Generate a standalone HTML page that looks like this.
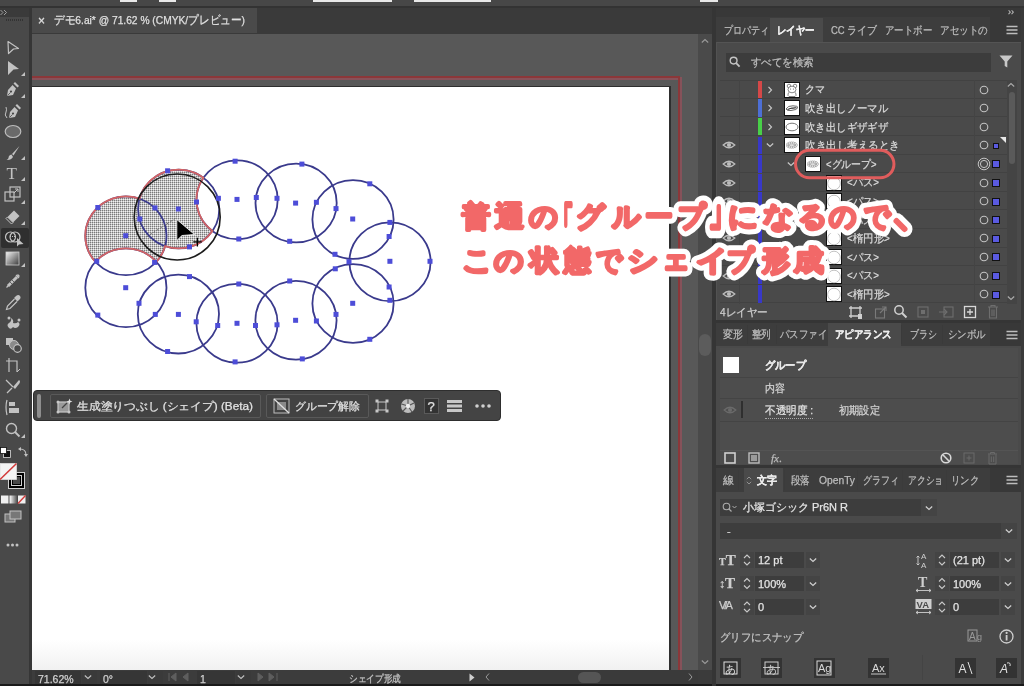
<!DOCTYPE html>
<html><head><meta charset="utf-8">
<style>
*{box-sizing:border-box;margin:0;padding:0}
html,body{width:1024px;height:686px;overflow:hidden;background:#3b3b3b;font-family:"Liberation Sans",sans-serif;color:#d6d6d6;font-size:11px}
.a{position:absolute}
.t{position:absolute;white-space:nowrap;line-height:1;-webkit-text-stroke:0.25px currentColor}
svg{position:absolute;overflow:visible}
</style></head><body><div class="a" style="left:0;top:0;width:1024px;height:686px;will-change:transform;overflow:hidden">

<div class="a" style="left:0px;top:0px;width:1024px;height:7px;background:#474747;"></div>
<div class="a" style="left:0px;top:6px;width:1024px;height:2px;background:#333;"></div>
<div class="a" style="left:120px;top:0px;width:17px;height:1.5px;background:#e8e8e8;"></div>
<div class="a" style="left:159px;top:0px;width:17px;height:1.5px;background:#e8e8e8;"></div>
<div class="a" style="left:313px;top:0px;width:79px;height:1.5px;background:#e8e8e8;"></div>
<div class="a" style="left:414px;top:0px;width:77px;height:1.5px;background:#e8e8e8;"></div>
<div class="a" style="left:700px;top:0px;width:18px;height:1.5px;background:#e8e8e8;"></div>
<div class="a" style="left:0px;top:8px;width:29px;height:678px;background:#494949;"></div>
<div class="a" style="left:0px;top:8px;width:29px;height:9px;background:#3a3a3a;"></div>
<div class="a" style="left:29px;top:8px;width:3px;height:678px;background:#363636;"></div>
<svg style="left:0px;top:9px;" width="10" height="7" viewBox="0 0 10 7"><path d="M0.5 1 L3 3.5 L0.5 6 M4 1 L6.5 3.5 L4 6" stroke="#aaa" stroke-width="0.9" fill="none"/></svg>
<svg style="left:6px;top:18px;" width="18" height="4" viewBox="0 0 18 4"><path d="M0 2H18" stroke="#333" stroke-width="2" stroke-dasharray="1 1"/></svg>
<svg style="left:6px;top:40px;" width="14" height="15" viewBox="0 0 14 15"><path d="M2 1.5 L12.5 8.5 L7.5 9 L2.5 13.5 Z" fill="none" stroke="#c2c2c2" stroke-width="1.2" stroke-linejoin="round"/></svg>
<svg style="left:6px;top:60px;" width="14" height="16" viewBox="0 0 14 16"><path d="M2 1 L13 9 L7.5 9.5 L2 15 Z" fill="#c2c2c2"/></svg>
<svg style="left:21px;top:72px;" width="4" height="4" viewBox="0 0 4 4"><path d="M4 0V4H0Z" fill="#c2c2c2"/></svg>
<svg style="left:4px;top:81px;" width="16" height="16" viewBox="0 0 16 16"><path d="M8.5 4 L12 7.5 L9 14 L3 15 L4 9 Z" fill="#c2c2c2"/><path d="M9.5 2.5 L11 1 L15 5 L13.5 6.5 Z" fill="#c2c2c2"/><circle cx="7" cy="10.5" r="1.1" fill="#494949"/><path d="M3.5 14.5 L6.5 11.5" stroke="#494949" stroke-width="0.8"/></svg>
<svg style="left:21px;top:94px;" width="4" height="4" viewBox="0 0 4 4"><path d="M4 0V4H0Z" fill="#c2c2c2"/></svg>
<svg style="left:4px;top:103px;" width="18" height="16" viewBox="0 0 18 16"><g transform="translate(2,0)"><path d="M8.5 4 L12 7.5 L9 14 L3 15 L4 9 Z" fill="#c2c2c2"/><path d="M9.5 2.5 L11 1 L15 5 L13.5 6.5 Z" fill="#c2c2c2"/><circle cx="7" cy="10.5" r="1.1" fill="#494949"/><path d="M3.5 14.5 L6.5 11.5" stroke="#494949" stroke-width="0.8"/></g><path d="M3 15 Q0 12 2 9 Q3 7 2 4" stroke="#c2c2c2" stroke-width="1" fill="none"/></svg>
<svg style="left:4px;top:124px;" width="18" height="15" viewBox="0 0 18 15"><ellipse cx="9" cy="7.5" rx="7.8" ry="6" fill="#6a6a6a" stroke="#bdbdbd" stroke-width="1.2"/></svg>
<svg style="left:5px;top:145px;" width="16" height="16" viewBox="0 0 16 16"><path d="M14.5 1 L7 9 L8.5 10.5 Z" fill="#c2c2c2"/><path d="M6.5 9.5 Q3.5 10 3.5 13 Q3 14.5 1.5 15 Q6 15.5 8 12 Z" fill="#c2c2c2"/></svg>
<svg style="left:21px;top:156px;" width="4" height="4" viewBox="0 0 4 4"><path d="M4 0V4H0Z" fill="#c2c2c2"/></svg>
<svg style="left:5px;top:164px;" width="16" height="16" viewBox="0 0 16 16"><text x="1.5" y="14.5" font-size="17" font-family="Liberation Serif" fill="#c2c2c2">T</text></svg>
<svg style="left:21px;top:177px;" width="4" height="4" viewBox="0 0 4 4"><path d="M4 0V4H0Z" fill="#c2c2c2"/></svg>
<svg style="left:4px;top:185px;" width="18" height="18" viewBox="0 0 18 18"><rect x="1" y="7" width="9" height="9" fill="none" stroke="#c2c2c2" stroke-width="1.2"/><rect x="6" y="2" width="10" height="10" fill="none" stroke="#c2c2c2" stroke-width="1.2"/><path d="M10 8 L14 4 M11 4H14V7" stroke="#c2c2c2" stroke-width="1" fill="none"/></svg>
<svg style="left:21px;top:200px;" width="4" height="4" viewBox="0 0 4 4"><path d="M4 0V4H0Z" fill="#c2c2c2"/></svg>
<svg style="left:5px;top:209px;" width="16" height="15" viewBox="0 0 16 15"><path d="M9 1.5 L14.5 7 L8 13.5 L2.5 8 Z" fill="#c2c2c2"/><path d="M2.5 8 L8 13.5 L6.5 15 L1 9.5 Z" fill="none" stroke="#c2c2c2" stroke-width="1"/></svg>
<svg style="left:21px;top:221px;" width="4" height="4" viewBox="0 0 4 4"><path d="M4 0V4H0Z" fill="#c2c2c2"/></svg>
<div class="a" style="left:1px;top:228px;width:28px;height:20px;background:#2f2f2f;border-radius:2px"></div>
<svg style="left:4px;top:230px;" width="22" height="17" viewBox="0 0 22 17"><circle cx="6.5" cy="7" r="5" fill="none" stroke="#c2c2c2" stroke-width="1.2"/><circle cx="11" cy="7" r="5" fill="none" stroke="#c2c2c2" stroke-width="1.2"/><path d="M6 6.5H12" stroke="#c2c2c2" stroke-width="1" stroke-dasharray="1 1"/><path d="M13 8 L13 16.5 L15 14.5 L19.5 14 Z" fill="#c2c2c2"/></svg>
<svg style="left:5px;top:251px;" width="17" height="16" viewBox="0 0 17 16"><defs><linearGradient id="lg" x1="0" y1="0" x2="1" y2="1"><stop offset="0" stop-color="#f4f4f4"/><stop offset="1" stop-color="#3a3a3a"/></linearGradient></defs><rect x="1" y="1" width="13" height="13" fill="url(#lg)" stroke="#cfcfcf" stroke-width="0.8"/></svg>
<svg style="left:21px;top:263px;" width="4" height="4" viewBox="0 0 4 4"><path d="M4 0V4H0Z" fill="#c2c2c2"/></svg>
<svg style="left:5px;top:273px;" width="16" height="16" viewBox="0 0 16 16"><path d="M3 13 L12 4" stroke="#c2c2c2" stroke-width="3"/><path d="M1.5 14.5 L4 12 M11 2 L14 5 M12.5 1.5 L14.5 3.5" stroke="#c2c2c2" stroke-width="1.3"/><path d="M5 9 L7 11 M7 7 L9 9" stroke="#494949" stroke-width="0.8"/></svg>
<svg style="left:5px;top:294px;" width="16" height="17" viewBox="0 0 16 17"><path d="M11 2 Q13.5 0 15 2 Q16.5 4 14 6 L12.5 7.5 L9 4 Z" fill="#c2c2c2"/><path d="M9.5 5 L2.5 12 L1.5 15.5 L5 14.5 L12 7.5" fill="none" stroke="#c2c2c2" stroke-width="1.2"/></svg>
<svg style="left:4px;top:315px;" width="19" height="16" viewBox="0 0 19 16"><path d="M5 13 Q2 10 5 8 Q8 6 7 3 Q10 5 9 8 Q12 9 14 7 Q17 9 14 12 Q11 14 9 12 Q7 15 5 13 Z" fill="#c2c2c2"/><circle cx="5" cy="3" r="1.5" fill="#c2c2c2"/><circle cx="15" cy="5" r="1.5" fill="#c2c2c2"/></svg>
<svg style="left:5px;top:337px;" width="18" height="16" viewBox="0 0 18 16"><rect x="1" y="1" width="7" height="7" fill="#c2c2c2"/><circle cx="9" cy="8" r="4.5" fill="#8a8a8a" stroke="#c2c2c2" stroke-width="1"/><circle cx="12.5" cy="11.5" r="3.8" fill="#494949" stroke="#c2c2c2" stroke-width="1.2"/></svg>
<svg style="left:5px;top:357px;" width="17" height="16" viewBox="0 0 17 16"><path d="M4 1V15M1 4H12V15" stroke="#c2c2c2" stroke-width="1.2" fill="none"/><path d="M12 15 L15 12" stroke="#c2c2c2" stroke-width="1"/></svg>
<svg style="left:4px;top:378px;" width="18" height="16" viewBox="0 0 18 16"><path d="M2 2 L9 9 M8 10 L3 15" stroke="#c2c2c2" stroke-width="1.3" fill="none"/><path d="M9 9 L15 2 Q17 3 15 6 L11 11 Z" fill="#c2c2c2"/></svg>
<svg style="left:5px;top:399px;" width="16" height="17" viewBox="0 0 16 17"><path d="M2 1 Q0 8 2 16" stroke="#c2c2c2" stroke-width="1.2" fill="none"/><rect x="4" y="3" width="6" height="4" fill="#c2c2c2"/><rect x="4" y="9" width="10" height="5" fill="#c2c2c2"/></svg>
<svg style="left:5px;top:422px;" width="17" height="16" viewBox="0 0 17 16"><circle cx="6.5" cy="6.5" r="5" fill="none" stroke="#c2c2c2" stroke-width="1.4"/><path d="M10 10 L14.5 14.5" stroke="#c2c2c2" stroke-width="1.8"/></svg>
<svg style="left:21px;top:434px;" width="4" height="4" viewBox="0 0 4 4"><path d="M4 0V4H0Z" fill="#c2c2c2"/></svg>
<svg style="left:0px;top:447px;" width="12" height="11" viewBox="0 0 12 11"><rect x="3.5" y="3.5" width="7" height="7" fill="#111" stroke="#ddd" stroke-width="0.8"/><rect x="0.5" y="0.5" width="6" height="6" fill="#fff" stroke="#111" stroke-width="0.8"/></svg>
<svg style="left:18px;top:447px;" width="10" height="11" viewBox="0 0 10 11"><path d="M2 2 Q8 2 8 8" stroke="#c2c2c2" stroke-width="1.1" fill="none"/><path d="M0 2 L3 0 L3 4Z M8 10 L6 7 H10Z" fill="#c2c2c2"/></svg>
<svg style="left:8px;top:472px;" width="18" height="18" viewBox="0 0 18 18"><rect x="0.5" y="0.5" width="16" height="16" fill="#000" stroke="#cfcfcf" stroke-width="1"/><rect x="3.5" y="3.5" width="10" height="10" fill="none" stroke="#cfcfcf" stroke-width="1"/><rect x="5" y="5" width="7" height="7" fill="#494949"/></svg>
<svg style="left:0px;top:463px;" width="17" height="17" viewBox="0 0 17 17"><rect x="0" y="0.5" width="16.5" height="16" fill="#f4f4f4" stroke="#ddd" stroke-width="0.8"/><path d="M0 16.5 L16.5 0.5" stroke="#d23a3a" stroke-width="1.6"/></svg>
<svg style="left:1px;top:495px;" width="24" height="9" viewBox="0 0 24 9"><defs><linearGradient id="lg2" x1="0" x2="1"><stop offset="0" stop-color="#fff"/><stop offset="1" stop-color="#555"/></linearGradient></defs><rect x="0" y="0.5" width="7.5" height="8" fill="#f0f0f0"/><rect x="8.5" y="0.5" width="7.5" height="8" fill="url(#lg2)"/><rect x="17" y="0.5" width="7.5" height="8" fill="#f0f0f0"/><path d="M17 8.5 L24.5 0.5" stroke="#d23a3a" stroke-width="1.3"/></svg>
<svg style="left:4px;top:510px;" width="18" height="13" viewBox="0 0 18 13"><rect x="1" y="4" width="10" height="8" fill="#777" stroke="#c2c2c2" stroke-width="1"/><rect x="6" y="1" width="11" height="8" fill="#777" stroke="#c2c2c2" stroke-width="1"/></svg>
<svg style="left:6px;top:543px;" width="13" height="4" viewBox="0 0 13 4"><circle cx="2" cy="2" r="1.5" fill="#c2c2c2"/><circle cx="6.5" cy="2" r="1.5" fill="#c2c2c2"/><circle cx="11" cy="2" r="1.5" fill="#c2c2c2"/></svg>
<div class="a" style="left:32px;top:8px;width:680px;height:26px;background:#3a3a3a;"></div>
<div class="a" style="left:32px;top:8px;width:225px;height:25px;background:#4a4a4a;"></div>
<div class="t" style="left:38px;top:14.5px;font-size:12px;color:#e0e0e0;">×</div>
<div class="t" style="left:54px;top:14.8px;font-size:11.5px;color:#e0e0e0;transform:scaleX(0.8902);transform-origin:0 0;">デモ6.ai* @ 71.62 % (CMYK/プレビュー)</div>
<div class="a" style="left:32px;top:34px;width:666px;height:636px;background:#585858;"></div>
<div class="a" style="left:32px;top:87px;width:637px;height:583px;background:#fff;"></div>
<div class="a" style="left:669px;top:86px;width:1.5px;height:584px;background:#2e2e2e;"></div>
<div class="a" style="left:32px;top:86px;width:638px;height:1px;background:#2e2e2e;"></div>
<div class="a" style="left:32px;top:640px;width:637px;height:30px;background:#fff;background:linear-gradient(#fff,#f1f1f1)"></div>
<div class="a" style="left:32px;top:76px;width:648px;height:2px;background:#8c3739;"></div>
<div class="a" style="left:32px;top:78px;width:649px;height:1.5px;background:#86525a;"></div>
<div class="a" style="left:678px;top:76px;width:2px;height:594px;background:#8c3739;"></div>
<div class="a" style="left:680px;top:77px;width:1.5px;height:593px;background:#86525a;"></div>
<svg width="1024" height="686" style="left:0;top:0">
<defs><pattern id="dots" width="2" height="2" patternUnits="userSpaceOnUse"><rect width="2" height="2" fill="#f2f2f2"/><rect width="1" height="1" fill="#7a7a7a"/><rect x="1" width="1" height="1" fill="#c2c2c2"/><rect y="1" width="1" height="1" fill="#c2c2c2"/></pattern></defs>
<path d="M95.39 261.8 A40.6 39.4 0 0 1 139.52 198.68 A40.6 39.4 0 0 1 203.4 177.73 A40.6 39.4 0 0 0 212.4 230.97 A40.6 39.4 0 0 1 165.08 246.12 A40.6 39.4 0 0 1 156.41 261.8 A40.6 39.4 0 0 0 95.39 261.8 Z" fill="url(#dots)"/>
<g fill="none" stroke="#3a3a8c" stroke-width="1.8">
<ellipse cx="125.9" cy="235.8" rx="40.6" ry="39.4"/>
<ellipse cx="178.7" cy="209.0" rx="40.6" ry="39.4"/>
<ellipse cx="237.1" cy="199.7" rx="40.6" ry="39.4"/>
<ellipse cx="296.1" cy="203.0" rx="40.6" ry="39.4"/>
<ellipse cx="353.0" cy="219.5" rx="40.6" ry="39.4"/>
<ellipse cx="390.0" cy="261.8" rx="40.6" ry="39.4"/>
<ellipse cx="353.0" cy="303.5" rx="40.6" ry="39.4"/>
<ellipse cx="296.0" cy="320.2" rx="40.6" ry="39.4"/>
<ellipse cx="237.0" cy="323.3" rx="40.6" ry="39.4"/>
<ellipse cx="178.4" cy="314.1" rx="40.6" ry="39.4"/>
<ellipse cx="125.9" cy="287.8" rx="40.6" ry="39.4"/>
</g>
<path d="M95.39 261.8 A40.6 39.4 0 0 1 139.52 198.68 A40.6 39.4 0 0 1 203.4 177.73 A40.6 39.4 0 0 0 212.4 230.97 A40.6 39.4 0 0 1 165.08 246.12 A40.6 39.4 0 0 1 156.41 261.8 A40.6 39.4 0 0 0 95.39 261.8 Z" fill="none" stroke="#d46464" stroke-width="1.8"/>
<circle cx="177.2" cy="217" r="43" fill="none" stroke="#1c1c1c" stroke-width="1.6"/>
<line x1="140" y1="241" x2="176" y2="218" stroke="#555" stroke-width="0.8" stroke-dasharray="2 2"/>
<g fill="#4d4dd8">
<rect x="95.3" y="205.0" width="5" height="5"/>
<rect x="123.2" y="233.2" width="5" height="5"/>
<rect x="165.1" y="168.3" width="5" height="5"/>
<rect x="152.5" y="205.4" width="5" height="5"/>
<rect x="175.9" y="206.5" width="5" height="5"/>
<rect x="137.3" y="216.5" width="5" height="5"/>
<rect x="194.0" y="199.5" width="5" height="5"/>
<rect x="187.0" y="244.4" width="5" height="5"/>
<rect x="94.2" y="258.8" width="5" height="5"/>
<rect x="152.1" y="259.9" width="5" height="5"/>
<rect x="232.6" y="158.7" width="5" height="5"/>
<rect x="215.9" y="195.8" width="5" height="5"/>
<rect x="234.5" y="196.9" width="5" height="5"/>
<rect x="253.8" y="195.0" width="5" height="5"/>
<rect x="274.5" y="195.8" width="5" height="5"/>
<rect x="236.3" y="236.5" width="5" height="5"/>
<rect x="299.4" y="161.6" width="5" height="5"/>
<rect x="293.1" y="200.6" width="5" height="5"/>
<rect x="313.9" y="199.8" width="5" height="5"/>
<rect x="333.5" y="206.1" width="5" height="5"/>
<rect x="287.2" y="238.8" width="5" height="5"/>
<rect x="367.3" y="181.3" width="5" height="5"/>
<rect x="350.2" y="216.5" width="5" height="5"/>
<rect x="387.4" y="219.9" width="5" height="5"/>
<rect x="386.6" y="234.0" width="5" height="5"/>
<rect x="332.5" y="251.8" width="5" height="5"/>
<rect x="346.5" y="259.2" width="5" height="5"/>
<rect x="387.4" y="258.8" width="5" height="5"/>
<rect x="427.5" y="258.8" width="5" height="5"/>
<rect x="332.8" y="266.3" width="5" height="5"/>
<rect x="386.6" y="284.5" width="5" height="5"/>
<rect x="387.4" y="297.8" width="5" height="5"/>
<rect x="350.2" y="300.8" width="5" height="5"/>
<rect x="367.3" y="336.8" width="5" height="5"/>
<rect x="333.5" y="311.9" width="5" height="5"/>
<rect x="313.9" y="318.5" width="5" height="5"/>
<rect x="293.1" y="317.8" width="5" height="5"/>
<rect x="299.8" y="356.4" width="5" height="5"/>
<rect x="287.2" y="278.5" width="5" height="5"/>
<rect x="274.5" y="322.3" width="5" height="5"/>
<rect x="253.0" y="323.0" width="5" height="5"/>
<rect x="234.5" y="320.8" width="5" height="5"/>
<rect x="232.6" y="359.4" width="5" height="5"/>
<rect x="236.3" y="281.5" width="5" height="5"/>
<rect x="215.2" y="323.0" width="5" height="5"/>
<rect x="193.7" y="319.3" width="5" height="5"/>
<rect x="175.9" y="311.9" width="5" height="5"/>
<rect x="165.1" y="349.0" width="5" height="5"/>
<rect x="187.0" y="274.1" width="5" height="5"/>
<rect x="136.5" y="300.8" width="5" height="5"/>
<rect x="152.8" y="311.9" width="5" height="5"/>
<rect x="123.2" y="285.2" width="5" height="5"/>
<rect x="95.3" y="312.6" width="5" height="5"/>
</g>
<path d="M176.8 219.5 L176.8 240.5 L182 235.5 L194.5 234.5 Z" fill="#000" stroke="#fff" stroke-width="0.8"/>
<path d="M197.4 237.7 V246.4 M193.3 241.8 H201.7" stroke="#000" stroke-width="1.3"/>
</svg>
<div class="a" style="left:698px;top:34px;width:14px;height:636px;background:#4a4a4a;"></div>
<div class="a" style="left:32px;top:670px;width:666px;height:14px;background:#3c3c3c;"></div>
<div class="a" style="left:0px;top:684px;width:1024px;height:2px;background:#1a1a1a;"></div>
<div class="a" style="left:712px;top:8px;width:4px;height:678px;background:#353535;"></div>
<div class="a" style="left:716px;top:8px;width:308px;height:676px;background:#4a4a4a;"></div>
<div class="a" style="left:716px;top:8px;width:308px;height:9px;background:#383838;"></div>
<div class="t" style="left:1008px;top:8.0px;font-size:9px;color:#bbbbbb;">&#8250;&#8250;</div>
<div class="a" style="left:716px;top:17px;width:308px;height:25px;background:#3d3d3d;"></div>
<div class="a" style="left:770px;top:18px;width:53px;height:24px;background:#4a4a4a;"></div>
<div class="t" style="left:724px;top:24.8px;font-size:10.5px;color:#bdbdbd;transform:scaleX(0.8182);transform-origin:0 0;">プロパティ</div>
<div class="t" style="left:777px;top:24.8px;font-size:10.5px;color:#ececec;transform:scaleX(0.8636);transform-origin:0 0;font-weight:bold">レイヤー</div>
<div class="t" style="left:831px;top:24.8px;font-size:10.5px;color:#bdbdbd;transform:scaleX(0.9003);transform-origin:0 0;">CC ライブ</div>
<div class="t" style="left:885px;top:24.8px;font-size:10.5px;color:#bdbdbd;transform:scaleX(0.8545);transform-origin:0 0;">アートボー</div>
<div class="t" style="left:940px;top:24.8px;font-size:10.5px;color:#bdbdbd;transform:scaleX(0.8727);transform-origin:0 0;">アセットの</div>
<div class="a" style="left:990px;top:17px;width:34px;height:25px;background:#383838;"></div>
<svg style="left:1006px;top:25px;" width="12" height="10" viewBox="0 0 12 10"><path d="M0.5 1.5H11.5M0.5 5H11.5M0.5 8.5H11.5" stroke="#bdbdbd" stroke-width="1.4"/></svg>
<div class="a" style="left:716px;top:42px;width:305px;height:1px;background:#545454;"></div>
<div class="a" style="left:716px;top:42px;width:1px;height:278px;background:#525252;"></div>
<div class="a" style="left:726px;top:53px;width:265px;height:19px;background:#3c3c3c;"></div>
<svg style="left:729px;top:56px;" width="12" height="12" viewBox="0 0 12 12"><circle cx="4.6" cy="4.6" r="3.4" fill="none" stroke="#c4c4c4" stroke-width="1.4"/><path d="M7.2 7.2 L10.6 10.6" stroke="#c4c4c4" stroke-width="1.8"/></svg>
<div class="t" style="left:751px;top:56.8px;font-size:10.5px;color:#bdbdbd;transform:scaleX(0.9545);transform-origin:0 0;">すべてを検索</div>
<svg style="left:999px;top:55px;" width="14" height="13" viewBox="0 0 14 13"><path d="M0.5 0.5 H13.5 L8.3 6.5 V12.5 L5.7 11 V6.5 Z" fill="#c8c8c8"/></svg>
<div class="a" style="left:720px;top:80px;width:287px;height:224px;background:#4a4a4a;"></div>
<div class="a" style="left:720px;top:97.8px;width:287px;height:1px;background:#424242;"></div>
<div class="a" style="left:758px;top:80.7px;width:4px;height:17.6px;background:#d54848;"></div>
<svg style="left:767px;top:85.5px;" width="6" height="8" viewBox="0 0 6 8"><path d="M1.5 0.8 L4.5 4 L1.5 7.2" fill="none" stroke="#c8c8c8" stroke-width="1.2"/></svg>
<div class="a" style="left:784px;top:81.5px;width:16px;height:16px;background:#111;"></div>
<div class="a" style="left:785px;top:82.5px;width:14px;height:14px;background:#fff;"></div>
<svg style="left:785px;top:82.5px;" width="14" height="14" viewBox="0 0 14 14"><circle cx="4" cy="3" r="1.8" fill="none" stroke="#555" stroke-width="0.7"/><circle cx="10" cy="3" r="1.8" fill="none" stroke="#555" stroke-width="0.7"/><ellipse cx="7" cy="6.5" rx="4" ry="3.3" fill="#fff" stroke="#555" stroke-width="0.7"/><circle cx="5.6" cy="6" r="0.5" fill="#333"/><circle cx="8.4" cy="6" r="0.5" fill="#333"/><path d="M3.5 9.5 Q2 13 4 13.5 H10 Q12 13 10.5 9.5" fill="none" stroke="#555" stroke-width="0.7"/></svg>
<div class="t" style="left:805px;top:84.2px;font-size:10.5px;color:#dadada;transform:scaleX(0.9091);transform-origin:0 0;">クマ</div>
<svg style="left:979px;top:84.5px;" width="10" height="10" viewBox="0 0 10 10"><circle cx="5" cy="5" r="3.8" fill="none" stroke="#c4c4c4" stroke-width="1.1"/></svg>
<div class="a" style="left:720px;top:116.4px;width:287px;height:1px;background:#424242;"></div>
<div class="a" style="left:758px;top:99.3px;width:4px;height:17.6px;background:#4d6fd6;"></div>
<svg style="left:767px;top:104.10000000000001px;" width="6" height="8" viewBox="0 0 6 8"><path d="M1.5 0.8 L4.5 4 L1.5 7.2" fill="none" stroke="#c8c8c8" stroke-width="1.2"/></svg>
<div class="a" style="left:784px;top:100.1px;width:16px;height:16px;background:#111;"></div>
<div class="a" style="left:785px;top:101.1px;width:14px;height:14px;background:#fff;"></div>
<svg style="left:785px;top:101.10000000000001px;" width="14" height="14" viewBox="0 0 14 14"><path d="M1 8 Q3 4.5 8 4.8 Q13 5 13 6.5 Q12 9 6 9.5 Q2 10 1 8 Z" fill="none" stroke="#444" stroke-width="0.8"/><path d="M2.5 8.5 Q6 6.5 11.5 6.8" stroke="#333" stroke-width="1"/></svg>
<div class="t" style="left:805px;top:102.9px;font-size:10.5px;color:#dadada;transform:scaleX(0.9432);transform-origin:0 0;">吹き出しノーマル</div>
<svg style="left:979px;top:103.10000000000001px;" width="10" height="10" viewBox="0 0 10 10"><circle cx="5" cy="5" r="3.8" fill="none" stroke="#c4c4c4" stroke-width="1.1"/></svg>
<div class="a" style="left:720px;top:135.0px;width:287px;height:1px;background:#424242;"></div>
<div class="a" style="left:758px;top:117.9px;width:4px;height:17.6px;background:#48d048;"></div>
<svg style="left:767px;top:122.7px;" width="6" height="8" viewBox="0 0 6 8"><path d="M1.5 0.8 L4.5 4 L1.5 7.2" fill="none" stroke="#c8c8c8" stroke-width="1.2"/></svg>
<div class="a" style="left:784px;top:118.7px;width:16px;height:16px;background:#111;"></div>
<div class="a" style="left:785px;top:119.7px;width:14px;height:14px;background:#fff;"></div>
<svg style="left:785px;top:119.7px;" width="14" height="14" viewBox="0 0 14 14"><ellipse cx="7" cy="7" rx="6" ry="3.8" fill="none" stroke="#555" stroke-width="0.8"/></svg>
<div class="t" style="left:805px;top:121.5px;font-size:10.5px;color:#dadada;transform:scaleX(0.9432);transform-origin:0 0;">吹き出しギザギザ</div>
<svg style="left:979px;top:121.7px;" width="10" height="10" viewBox="0 0 10 10"><circle cx="5" cy="5" r="3.8" fill="none" stroke="#c4c4c4" stroke-width="1.1"/></svg>
<div class="a" style="left:720px;top:153.6px;width:287px;height:1px;background:#424242;"></div>
<svg style="left:722px;top:140.3px;" width="14" height="10" viewBox="0 0 14 10"><path d="M1.2 5 Q7 -0.5 12.8 5 Q7 10.5 1.2 5 Z" fill="none" stroke="#bcbcbc" stroke-width="1.3"/><circle cx="7" cy="5" r="2.1" fill="#bcbcbc"/></svg>
<div class="a" style="left:758px;top:136.5px;width:4px;height:17.6px;background:#3838c8;"></div>
<svg style="left:766px;top:142.3px;" width="8" height="6" viewBox="0 0 8 6"><path d="M0.8 1.5 L4 4.5 L7.2 1.5" fill="none" stroke="#c8c8c8" stroke-width="1.2"/></svg>
<div class="a" style="left:784px;top:137.3px;width:16px;height:16px;background:#111;"></div>
<div class="a" style="left:785px;top:138.3px;width:14px;height:14px;background:#fff;"></div>
<svg style="left:785px;top:138.3px;" width="14" height="14" viewBox="0 0 14 14"><circle cx="2.78" cy="6.26" r="1.3" fill="none" stroke="#888" stroke-width="0.5"/><circle cx="4.46" cy="5.39" r="1.3" fill="none" stroke="#888" stroke-width="0.5"/><circle cx="6.33" cy="5.09" r="1.3" fill="none" stroke="#888" stroke-width="0.5"/><circle cx="8.22" cy="5.20" r="1.3" fill="none" stroke="#888" stroke-width="0.5"/><circle cx="10.04" cy="5.73" r="1.3" fill="none" stroke="#888" stroke-width="0.5"/><circle cx="11.22" cy="7.11" r="1.3" fill="none" stroke="#888" stroke-width="0.5"/><circle cx="10.04" cy="8.47" r="1.3" fill="none" stroke="#888" stroke-width="0.5"/><circle cx="8.22" cy="9.01" r="1.3" fill="none" stroke="#888" stroke-width="0.5"/><circle cx="6.33" cy="9.11" r="1.3" fill="none" stroke="#888" stroke-width="0.5"/><circle cx="4.45" cy="8.81" r="1.3" fill="none" stroke="#888" stroke-width="0.5"/><circle cx="2.78" cy="7.96" r="1.3" fill="none" stroke="#888" stroke-width="0.5"/></svg>
<div class="t" style="left:805px;top:140.1px;font-size:10.5px;color:#dadada;transform:scaleX(0.9596);transform-origin:0 0;">吹き出し考えるとき</div>
<svg style="left:979px;top:140.3px;" width="10" height="10" viewBox="0 0 10 10"><circle cx="5" cy="5" r="3.8" fill="none" stroke="#c4c4c4" stroke-width="1.1"/></svg>
<div class="a" style="left:993px;top:142.8px;width:6px;height:6px;background:#111;"></div>
<div class="a" style="left:994px;top:143.8px;width:4px;height:4px;background:#5a5ae0;"></div>
<div class="a" style="left:720px;top:172.2px;width:287px;height:1px;background:#424242;"></div>
<svg style="left:722px;top:158.90000000000003px;" width="14" height="10" viewBox="0 0 14 10"><path d="M1.2 5 Q7 -0.5 12.8 5 Q7 10.5 1.2 5 Z" fill="none" stroke="#bcbcbc" stroke-width="1.3"/><circle cx="7" cy="5" r="2.1" fill="#bcbcbc"/></svg>
<div class="a" style="left:758px;top:155.1px;width:4px;height:17.6px;background:#3838c8;"></div>
<svg style="left:787px;top:160.90000000000003px;" width="8" height="6" viewBox="0 0 8 6"><path d="M0.8 1.5 L4 4.5 L7.2 1.5" fill="none" stroke="#c8c8c8" stroke-width="1.2"/></svg>
<div class="a" style="left:804.5px;top:155.9px;width:16px;height:16px;background:#111;"></div>
<div class="a" style="left:805.5px;top:156.9px;width:14px;height:14px;background:#fff;"></div>
<svg style="left:805.5px;top:156.90000000000003px;" width="14" height="14" viewBox="0 0 14 14"><circle cx="2.78" cy="6.26" r="1.3" fill="none" stroke="#888" stroke-width="0.5"/><circle cx="4.46" cy="5.39" r="1.3" fill="none" stroke="#888" stroke-width="0.5"/><circle cx="6.33" cy="5.09" r="1.3" fill="none" stroke="#888" stroke-width="0.5"/><circle cx="8.22" cy="5.20" r="1.3" fill="none" stroke="#888" stroke-width="0.5"/><circle cx="10.04" cy="5.73" r="1.3" fill="none" stroke="#888" stroke-width="0.5"/><circle cx="11.22" cy="7.11" r="1.3" fill="none" stroke="#888" stroke-width="0.5"/><circle cx="10.04" cy="8.47" r="1.3" fill="none" stroke="#888" stroke-width="0.5"/><circle cx="8.22" cy="9.01" r="1.3" fill="none" stroke="#888" stroke-width="0.5"/><circle cx="6.33" cy="9.11" r="1.3" fill="none" stroke="#888" stroke-width="0.5"/><circle cx="4.45" cy="8.81" r="1.3" fill="none" stroke="#888" stroke-width="0.5"/><circle cx="2.78" cy="7.96" r="1.3" fill="none" stroke="#888" stroke-width="0.5"/></svg>
<div class="t" style="left:825.5px;top:158.7px;font-size:10.5px;color:#dadada;transform:scaleX(0.8975);transform-origin:0 0;">&lt;グループ&gt;</div>
<svg style="left:977px;top:156.90000000000003px;" width="14" height="14" viewBox="0 0 14 14"><circle cx="7" cy="7" r="5.8" fill="none" stroke="#c4c4c4" stroke-width="1"/><circle cx="7" cy="7" r="3.6" fill="none" stroke="#c4c4c4" stroke-width="1"/></svg>
<div class="a" style="left:992px;top:160.4px;width:8px;height:8px;background:#111;"></div>
<div class="a" style="left:993px;top:161.4px;width:6px;height:6px;background:#5a5ae0;"></div>
<div class="a" style="left:720px;top:190.8px;width:287px;height:1px;background:#424242;"></div>
<svg style="left:722px;top:177.5px;" width="14" height="10" viewBox="0 0 14 10"><path d="M1.2 5 Q7 -0.5 12.8 5 Q7 10.5 1.2 5 Z" fill="none" stroke="#bcbcbc" stroke-width="1.3"/><circle cx="7" cy="5" r="2.1" fill="#bcbcbc"/></svg>
<div class="a" style="left:758px;top:173.7px;width:4px;height:17.6px;background:#3838c8;"></div>
<div class="a" style="left:825.6px;top:174.5px;width:16px;height:16px;background:#111;"></div>
<div class="a" style="left:826.6px;top:175.5px;width:14px;height:14px;background:#fff;"></div>
<svg style="left:826.6px;top:175.5px;" width="14" height="14" viewBox="0 0 14 14"><circle cx="7" cy="7.5" r="6.3" fill="#fff" stroke="#999" stroke-width="0.6"/></svg>
<div class="t" style="left:846.6px;top:177.2px;font-size:10.5px;color:#dadada;transform:scaleX(0.9339);transform-origin:0 0;">&lt;パス&gt;</div>
<svg style="left:979px;top:177.5px;" width="10" height="10" viewBox="0 0 10 10"><circle cx="5" cy="5" r="3.8" fill="none" stroke="#c4c4c4" stroke-width="1.1"/></svg>
<div class="a" style="left:992px;top:179.0px;width:8px;height:8px;background:#111;"></div>
<div class="a" style="left:993px;top:180.0px;width:6px;height:6px;background:#5a5ae0;"></div>
<div class="a" style="left:720px;top:209.4px;width:287px;height:1px;background:#424242;"></div>
<svg style="left:722px;top:196.10000000000002px;" width="14" height="10" viewBox="0 0 14 10"><path d="M1.2 5 Q7 -0.5 12.8 5 Q7 10.5 1.2 5 Z" fill="none" stroke="#bcbcbc" stroke-width="1.3"/><circle cx="7" cy="5" r="2.1" fill="#bcbcbc"/></svg>
<div class="a" style="left:758px;top:192.3px;width:4px;height:17.6px;background:#3838c8;"></div>
<div class="a" style="left:825.6px;top:193.1px;width:16px;height:16px;background:#111;"></div>
<div class="a" style="left:826.6px;top:194.1px;width:14px;height:14px;background:#fff;"></div>
<svg style="left:826.6px;top:194.10000000000002px;" width="14" height="14" viewBox="0 0 14 14"><circle cx="7" cy="7.5" r="6.3" fill="#fff" stroke="#999" stroke-width="0.6"/></svg>
<div class="t" style="left:846.6px;top:195.9px;font-size:10.5px;color:#dadada;transform:scaleX(0.9339);transform-origin:0 0;">&lt;パス&gt;</div>
<svg style="left:979px;top:196.10000000000002px;" width="10" height="10" viewBox="0 0 10 10"><circle cx="5" cy="5" r="3.8" fill="none" stroke="#c4c4c4" stroke-width="1.1"/></svg>
<div class="a" style="left:992px;top:197.6px;width:8px;height:8px;background:#111;"></div>
<div class="a" style="left:993px;top:198.6px;width:6px;height:6px;background:#5a5ae0;"></div>
<div class="a" style="left:720px;top:228.0px;width:287px;height:1px;background:#424242;"></div>
<svg style="left:722px;top:214.70000000000005px;" width="14" height="10" viewBox="0 0 14 10"><path d="M1.2 5 Q7 -0.5 12.8 5 Q7 10.5 1.2 5 Z" fill="none" stroke="#bcbcbc" stroke-width="1.3"/><circle cx="7" cy="5" r="2.1" fill="#bcbcbc"/></svg>
<div class="a" style="left:758px;top:210.9px;width:4px;height:17.6px;background:#3838c8;"></div>
<div class="a" style="left:825.6px;top:211.7px;width:16px;height:16px;background:#111;"></div>
<div class="a" style="left:826.6px;top:212.7px;width:14px;height:14px;background:#fff;"></div>
<svg style="left:826.6px;top:212.70000000000005px;" width="14" height="14" viewBox="0 0 14 14"><circle cx="7" cy="7.5" r="6.3" fill="#fff" stroke="#999" stroke-width="0.6"/></svg>
<div class="t" style="left:846.6px;top:214.5px;font-size:10.5px;color:#dadada;transform:scaleX(0.9339);transform-origin:0 0;">&lt;パス&gt;</div>
<svg style="left:979px;top:214.70000000000005px;" width="10" height="10" viewBox="0 0 10 10"><circle cx="5" cy="5" r="3.8" fill="none" stroke="#c4c4c4" stroke-width="1.1"/></svg>
<div class="a" style="left:992px;top:216.2px;width:8px;height:8px;background:#111;"></div>
<div class="a" style="left:993px;top:217.2px;width:6px;height:6px;background:#5a5ae0;"></div>
<div class="a" style="left:720px;top:246.6px;width:287px;height:1px;background:#424242;"></div>
<svg style="left:722px;top:233.3px;" width="14" height="10" viewBox="0 0 14 10"><path d="M1.2 5 Q7 -0.5 12.8 5 Q7 10.5 1.2 5 Z" fill="none" stroke="#bcbcbc" stroke-width="1.3"/><circle cx="7" cy="5" r="2.1" fill="#bcbcbc"/></svg>
<div class="a" style="left:758px;top:229.5px;width:4px;height:17.6px;background:#3838c8;"></div>
<div class="a" style="left:825.6px;top:230.3px;width:16px;height:16px;background:#111;"></div>
<div class="a" style="left:826.6px;top:231.3px;width:14px;height:14px;background:#fff;"></div>
<svg style="left:826.6px;top:231.3px;" width="14" height="14" viewBox="0 0 14 14"><circle cx="7" cy="7.5" r="6.3" fill="#fff" stroke="#999" stroke-width="0.6"/></svg>
<div class="t" style="left:846.6px;top:233.1px;font-size:10.5px;color:#dadada;transform:scaleX(0.9433);transform-origin:0 0;">&lt;楕円形&gt;</div>
<svg style="left:979px;top:233.3px;" width="10" height="10" viewBox="0 0 10 10"><circle cx="5" cy="5" r="3.8" fill="none" stroke="#c4c4c4" stroke-width="1.1"/></svg>
<div class="a" style="left:992px;top:234.8px;width:8px;height:8px;background:#111;"></div>
<div class="a" style="left:993px;top:235.8px;width:6px;height:6px;background:#5a5ae0;"></div>
<div class="a" style="left:720px;top:265.2px;width:287px;height:1px;background:#424242;"></div>
<svg style="left:722px;top:251.90000000000003px;" width="14" height="10" viewBox="0 0 14 10"><path d="M1.2 5 Q7 -0.5 12.8 5 Q7 10.5 1.2 5 Z" fill="none" stroke="#bcbcbc" stroke-width="1.3"/><circle cx="7" cy="5" r="2.1" fill="#bcbcbc"/></svg>
<div class="a" style="left:758px;top:248.1px;width:4px;height:17.6px;background:#3838c8;"></div>
<div class="a" style="left:825.6px;top:248.9px;width:16px;height:16px;background:#111;"></div>
<div class="a" style="left:826.6px;top:249.9px;width:14px;height:14px;background:#fff;"></div>
<svg style="left:826.6px;top:249.90000000000003px;" width="14" height="14" viewBox="0 0 14 14"><circle cx="7" cy="7.5" r="6.3" fill="#fff" stroke="#999" stroke-width="0.6"/></svg>
<div class="t" style="left:846.6px;top:251.7px;font-size:10.5px;color:#dadada;transform:scaleX(0.9339);transform-origin:0 0;">&lt;パス&gt;</div>
<svg style="left:979px;top:251.90000000000003px;" width="10" height="10" viewBox="0 0 10 10"><circle cx="5" cy="5" r="3.8" fill="none" stroke="#c4c4c4" stroke-width="1.1"/></svg>
<div class="a" style="left:992px;top:253.4px;width:8px;height:8px;background:#111;"></div>
<div class="a" style="left:993px;top:254.4px;width:6px;height:6px;background:#5a5ae0;"></div>
<div class="a" style="left:720px;top:283.8px;width:287px;height:1px;background:#424242;"></div>
<svg style="left:722px;top:270.5px;" width="14" height="10" viewBox="0 0 14 10"><path d="M1.2 5 Q7 -0.5 12.8 5 Q7 10.5 1.2 5 Z" fill="none" stroke="#bcbcbc" stroke-width="1.3"/><circle cx="7" cy="5" r="2.1" fill="#bcbcbc"/></svg>
<div class="a" style="left:758px;top:266.7px;width:4px;height:17.6px;background:#3838c8;"></div>
<div class="a" style="left:825.6px;top:267.5px;width:16px;height:16px;background:#111;"></div>
<div class="a" style="left:826.6px;top:268.5px;width:14px;height:14px;background:#fff;"></div>
<svg style="left:826.6px;top:268.5px;" width="14" height="14" viewBox="0 0 14 14"><circle cx="7" cy="7.5" r="6.3" fill="#fff" stroke="#999" stroke-width="0.6"/></svg>
<div class="t" style="left:846.6px;top:270.2px;font-size:10.5px;color:#dadada;transform:scaleX(0.9339);transform-origin:0 0;">&lt;パス&gt;</div>
<svg style="left:979px;top:270.5px;" width="10" height="10" viewBox="0 0 10 10"><circle cx="5" cy="5" r="3.8" fill="none" stroke="#c4c4c4" stroke-width="1.1"/></svg>
<div class="a" style="left:992px;top:272.0px;width:8px;height:8px;background:#111;"></div>
<div class="a" style="left:993px;top:273.0px;width:6px;height:6px;background:#5a5ae0;"></div>
<div class="a" style="left:720px;top:302.4px;width:287px;height:1px;background:#424242;"></div>
<svg style="left:722px;top:289.1px;" width="14" height="10" viewBox="0 0 14 10"><path d="M1.2 5 Q7 -0.5 12.8 5 Q7 10.5 1.2 5 Z" fill="none" stroke="#bcbcbc" stroke-width="1.3"/><circle cx="7" cy="5" r="2.1" fill="#bcbcbc"/></svg>
<div class="a" style="left:758px;top:285.3px;width:4px;height:17.6px;background:#3838c8;"></div>
<div class="a" style="left:825.6px;top:286.1px;width:16px;height:16px;background:#111;"></div>
<div class="a" style="left:826.6px;top:287.1px;width:14px;height:14px;background:#fff;"></div>
<svg style="left:826.6px;top:287.1px;" width="14" height="14" viewBox="0 0 14 14"><circle cx="7" cy="7.5" r="6.3" fill="#fff" stroke="#999" stroke-width="0.6"/></svg>
<div class="t" style="left:846.6px;top:288.9px;font-size:10.5px;color:#dadada;transform:scaleX(0.9433);transform-origin:0 0;">&lt;楕円形&gt;</div>
<svg style="left:979px;top:289.1px;" width="10" height="10" viewBox="0 0 10 10"><circle cx="5" cy="5" r="3.8" fill="none" stroke="#c4c4c4" stroke-width="1.1"/></svg>
<div class="a" style="left:992px;top:290.6px;width:8px;height:8px;background:#111;"></div>
<div class="a" style="left:993px;top:291.6px;width:6px;height:6px;background:#5a5ae0;"></div>
<div class="a" style="left:720px;top:80px;width:287px;height:1px;background:#424242;"></div>
<div class="a" style="left:739px;top:80px;width:1px;height:224px;background:#444;"></div>
<div class="a" style="left:974px;top:80px;width:1px;height:224px;background:#444;"></div>
<svg style="left:1000px;top:137px;" width="6" height="6" viewBox="0 0 6 6"><path d="M0 0 H6 V6 Z" fill="#e8e8e8"/></svg>
<div class="a" style="left:1007px;top:80px;width:10px;height:224px;background:#444;"></div>
<div class="a" style="left:1009px;top:92px;width:6px;height:72px;background:#5a5a5a;border-radius:3px"></div>
<svg style="left:1007px;top:295px;" width="8" height="6" viewBox="0 0 8 6"><path d="M0.8 1.5 L4 4.5 L7.2 1.5" fill="none" stroke="#aaa" stroke-width="1.2"/></svg>
<svg style="left:1007px;top:82px;" width="8" height="6" viewBox="0 0 8 6"><path d="M0.8 4.5 L4 1.5 L7.2 4.5" fill="none" stroke="#aaa" stroke-width="1.1"/></svg>
<div class="t" style="left:720px;top:306.8px;font-size:10.5px;color:#cfcfcf;transform:scaleX(0.9630);transform-origin:0 0;">4レイヤー</div>
<svg style="left:848px;top:304px;" width="16" height="16" viewBox="0 0 16 16"><path d="M3 2V14M1 4H14M1 12H14M12 2V14" stroke="#d0d0d0" stroke-width="1.3" fill="none"/><rect x="10" y="10" width="4" height="5" fill="#d0d0d0"/></svg>
<svg style="left:874px;top:305px;" width="14" height="14" viewBox="0 0 14 14"><rect x="1.5" y="4" width="9" height="9" fill="none" stroke="#7a7a7a" stroke-width="1.1"/><path d="M6 8 L12 2 M8 2H12V6" stroke="#7a7a7a" stroke-width="1.1" fill="none"/></svg>
<svg style="left:893px;top:304px;" width="15" height="15" viewBox="0 0 15 15"><circle cx="6" cy="6" r="4.2" fill="none" stroke="#d0d0d0" stroke-width="1.5"/><path d="M9 9 L13.5 13.5" stroke="#d0d0d0" stroke-width="2"/></svg>
<svg style="left:916px;top:305px;" width="14" height="14" viewBox="0 0 14 14"><rect x="2" y="2" width="10" height="10" fill="none" stroke="#6e6e6e" stroke-width="1.1"/><rect x="5" y="5" width="4" height="4" fill="#6e6e6e"/></svg>
<svg style="left:938px;top:305px;" width="16" height="14" viewBox="0 0 16 14"><rect x="6" y="2" width="9" height="10" fill="none" stroke="#6e6e6e" stroke-width="1.1"/><path d="M1 7H9M6 4L9 7L6 10" stroke="#6e6e6e" stroke-width="1.1" fill="none"/></svg>
<svg style="left:963px;top:305px;" width="14" height="14" viewBox="0 0 14 14"><rect x="1.5" y="1.5" width="11" height="11" fill="none" stroke="#d8d8d8" stroke-width="1.3"/><path d="M7 4V10M4 7H10" stroke="#d8d8d8" stroke-width="1.3"/></svg>
<svg style="left:987px;top:304px;" width="12" height="15" viewBox="0 0 12 15"><path d="M1 3H11M4 3V1.5H8V3M2.5 3.5V14H9.5V3.5M5 5.5V12M7 5.5V12" stroke="#6e6e6e" stroke-width="1.1" fill="none"/></svg>
<div class="a" style="left:716px;top:320px;width:308px;height:3px;background:#353535;"></div>
<div class="a" style="left:716px;top:323px;width:308px;height:23px;background:#3d3d3d;"></div>
<div class="a" style="left:828px;top:323px;width:73px;height:23px;background:#4a4a4a;"></div>
<div class="t" style="left:723px;top:329.2px;font-size:10.5px;color:#bdbdbd;transform:scaleX(0.9091);transform-origin:0 0;">変形</div>
<div class="t" style="left:752px;top:329.2px;font-size:10.5px;color:#bdbdbd;transform:scaleX(0.8636);transform-origin:0 0;">整列</div>
<div class="t" style="left:780px;top:329.2px;font-size:10.5px;color:#bdbdbd;transform:scaleX(0.8545);transform-origin:0 0;">パスファイ</div>
<div class="t" style="left:835px;top:329.2px;font-size:10.5px;color:#ececec;transform:scaleX(0.8636);transform-origin:0 0;font-weight:bold">アピアランス</div>
<div class="t" style="left:910px;top:329.2px;font-size:10.5px;color:#bdbdbd;transform:scaleX(0.8182);transform-origin:0 0;">ブラシ</div>
<div class="t" style="left:948px;top:329.2px;font-size:10.5px;color:#bdbdbd;transform:scaleX(0.8636);transform-origin:0 0;">シンボル</div>
<div class="a" style="left:990px;top:323px;width:34px;height:23px;background:#383838;"></div>
<svg style="left:1006px;top:329.5px;" width="12" height="10" viewBox="0 0 12 10"><path d="M0.5 1.5H11.5M0.5 5H11.5M0.5 8.5H11.5" stroke="#bdbdbd" stroke-width="1.4"/></svg>
<div class="a" style="left:747px;top:325px;width:1px;height:19px;background:#3a3a3a;"></div>
<div class="a" style="left:776px;top:325px;width:1px;height:19px;background:#3a3a3a;"></div>
<div class="a" style="left:901px;top:325px;width:1px;height:19px;background:#3a3a3a;"></div>
<div class="a" style="left:942px;top:325px;width:1px;height:19px;background:#3a3a3a;"></div>
<div class="a" style="left:716px;top:346px;width:308px;height:119px;background:#4a4a4a;"></div>
<div class="a" style="left:720px;top:348px;width:298px;height:116px;background:#4d4d4d;"></div>
<div class="a" style="left:720px;top:376.5px;width:298px;height:1px;background:#444;"></div>
<div class="a" style="left:720px;top:398px;width:298px;height:1px;background:#444;"></div>
<div class="a" style="left:720px;top:420.5px;width:298px;height:1px;background:#444;"></div>
<div class="a" style="left:723px;top:357px;width:16px;height:16px;background:#fff;"></div>
<div class="t" style="left:765px;top:360.0px;font-size:11px;color:#e8e8e8;transform:scaleX(0.9318);transform-origin:0 0;font-weight:bold">グループ</div>
<div class="t" style="left:765px;top:383.2px;font-size:10.5px;color:#d4d4d4;transform:scaleX(0.9091);transform-origin:0 0;">内容</div>
<svg style="left:723px;top:405px;" width="14" height="10" viewBox="0 0 14 10"><path d="M1.2 5 Q7 -0.5 12.8 5 Q7 10.5 1.2 5 Z" fill="none" stroke="#6a6a6a" stroke-width="1.3"/><circle cx="7" cy="5" r="2.1" fill="#6a6a6a"/></svg>
<div class="a" style="left:741px;top:401px;width:2px;height:17px;background:#2f2f2f;"></div>
<div class="t" style="left:765px;top:404.8px;font-size:10.5px;color:#e0e0e0;transform:scaleX(0.9630);transform-origin:0 0;">不透明度 :</div>
<div class="a" style="left:765px;top:418px;width:48px;height:0;border-top:1px dotted #aaa"></div>
<div class="t" style="left:839px;top:404.8px;font-size:10.5px;color:#d4d4d4;transform:scaleX(0.9318);transform-origin:0 0;">初期設定</div>
<div class="a" style="left:720px;top:450px;width:298px;height:1px;background:#545454;"></div>
<svg style="left:724px;top:452px;" width="12" height="12" viewBox="0 0 12 12"><rect x="1" y="1" width="10" height="10" fill="none" stroke="#d0d0d0" stroke-width="1.6"/></svg>
<svg style="left:748px;top:452px;" width="12" height="12" viewBox="0 0 12 12"><rect x="1" y="1" width="10" height="10" fill="none" stroke="#bdbdbd" stroke-width="1.4"/><rect x="3" y="3" width="6" height="6" fill="#9a9a9a"/></svg>
<div class="t" style="left:771px;top:452.5px;font-size:11px;color:#bdbdbd;font-family:'Liberation Serif',serif"><i>fx</i>.</div>
<svg style="left:940px;top:452px;" width="12" height="12" viewBox="0 0 12 12"><circle cx="6" cy="6" r="4.8" fill="none" stroke="#d8d8d8" stroke-width="1.6"/><path d="M2.8 2.8 L9.2 9.2" stroke="#d8d8d8" stroke-width="1.6"/></svg>
<svg style="left:963px;top:452px;" width="12" height="12" viewBox="0 0 12 12"><rect x="1" y="1" width="10" height="10" fill="none" stroke="#6a6a6a" stroke-width="1"/><path d="M6 3.5V8.5M3.5 6H8.5" stroke="#6a6a6a" stroke-width="1"/></svg>
<svg style="left:987px;top:451px;" width="11" height="14" viewBox="0 0 11 14"><path d="M1 3H10M3.5 3V1.5H7.5V3M2 3.5V13H9V3.5M4.3 5.5V11M6.7 5.5V11" stroke="#6a6a6a" stroke-width="1" fill="none"/></svg>
<div class="a" style="left:716px;top:465px;width:308px;height:3px;background:#353535;"></div>
<div class="a" style="left:716px;top:468px;width:308px;height:24px;background:#3d3d3d;"></div>
<div class="a" style="left:744px;top:468px;width:39px;height:24px;background:#4a4a4a;"></div>
<div class="t" style="left:723px;top:474.8px;font-size:10.5px;color:#bdbdbd;">線</div>
<svg style="left:746px;top:476px;" width="6" height="9" viewBox="0 0 6 9"><path d="M0.8 3.2 L3 1 L5.2 3.2 M0.8 5.8 L3 8 L5.2 5.8" stroke="#9a9a9a" stroke-width="0.9" fill="none"/></svg>
<div class="t" style="left:757px;top:474.8px;font-size:10.5px;color:#ececec;transform:scaleX(0.9091);transform-origin:0 0;font-weight:bold">文字</div>
<div class="t" style="left:791px;top:474.8px;font-size:10.5px;color:#bdbdbd;transform:scaleX(0.8636);transform-origin:0 0;">段落</div>
<div class="t" style="left:819px;top:474.8px;font-size:10.5px;color:#bdbdbd;transform:scaleX(0.9788);transform-origin:0 0;">OpenTy</div>
<div class="t" style="left:863px;top:474.8px;font-size:10.5px;color:#bdbdbd;transform:scaleX(0.8182);transform-origin:0 0;">グラフィ</div>
<div class="t" style="left:908px;top:474.8px;font-size:10.5px;color:#bdbdbd;transform:scaleX(0.7955);transform-origin:0 0;">アクショ</div>
<div class="t" style="left:951px;top:474.8px;font-size:10.5px;color:#bdbdbd;transform:scaleX(0.8485);transform-origin:0 0;">リンク</div>
<div class="a" style="left:990px;top:468px;width:34px;height:24px;background:#383838;"></div>
<svg style="left:1006px;top:475px;" width="12" height="10" viewBox="0 0 12 10"><path d="M0.5 1.5H11.5M0.5 5H11.5M0.5 8.5H11.5" stroke="#bdbdbd" stroke-width="1.4"/></svg>
<div class="a" style="left:738px;top:470px;width:1px;height:20px;background:#3b3b3b;"></div>
<div class="a" style="left:784px;top:470px;width:1px;height:20px;background:#3b3b3b;"></div>
<div class="a" style="left:857px;top:470px;width:1px;height:20px;background:#3b3b3b;"></div>
<div class="a" style="left:902px;top:470px;width:1px;height:20px;background:#3b3b3b;"></div>
<div class="a" style="left:946px;top:470px;width:1px;height:20px;background:#3b3b3b;"></div>
<div class="a" style="left:716px;top:492px;width:308px;height:192px;background:#4a4a4a;"></div>
<div class="a" style="left:720px;top:499px;width:201px;height:17px;background:#3d3d3d;"></div>
<div class="a" style="left:921px;top:499px;width:16px;height:17px;background:#444;"></div>
<svg style="left:722px;top:502px;" width="16" height="11" viewBox="0 0 16 11"><circle cx="4.5" cy="4.5" r="3.3" fill="none" stroke="#aaa" stroke-width="1.1"/><path d="M7 7 L9.5 9.5" stroke="#aaa" stroke-width="1.2"/><path d="M10.5 4 L12.5 6 L14.5 4" stroke="#aaa" stroke-width="1" fill="none"/></svg>
<div class="t" style="left:743px;top:502.0px;font-size:11px;color:#e4e4e4;transform:scaleX(0.9988);transform-origin:0 0;">小塚ゴシック Pr6N R</div>
<svg style="left:925px;top:504.5px;" width="8" height="6" viewBox="0 0 8 6"><path d="M0.8 1.5 L4 4.5 L7.2 1.5" fill="none" stroke="#d0d0d0" stroke-width="1.2"/></svg>
<div class="a" style="left:720px;top:523px;width:281px;height:16px;background:#3d3d3d;"></div>
<div class="a" style="left:1001px;top:523px;width:16px;height:16px;background:#444;"></div>
<div class="t" style="left:727px;top:525.5px;font-size:11px;color:#d0d0d0;">-</div>
<svg style="left:1005px;top:528px;" width="8" height="6" viewBox="0 0 8 6"><path d="M0.8 1.5 L4 4.5 L7.2 1.5" fill="none" stroke="#d0d0d0" stroke-width="1.2"/></svg>
<div class="a" style="left:740px;top:552px;width:14px;height:16px;background:#444;"></div>
<svg style="left:741px;top:553px;" width="12" height="14" viewBox="0 0 12 14"><path d="M3 5.0 L6 2.0 L9 5.0 M3 9.0 L6 12.0 L9 9.0" stroke="#c8c8c8" stroke-width="1.1" fill="none"/></svg>
<div class="a" style="left:755px;top:552px;width:49px;height:16px;background:#3d3d3d;"></div>
<div class="t" style="left:758px;top:555.0px;font-size:11px;color:#e4e4e4;">12 pt</div>
<div class="a" style="left:806px;top:552px;width:14px;height:16px;background:#444;"></div>
<svg style="left:809px;top:557.0px;" width="8" height="6" viewBox="0 0 8 6"><path d="M0.8 1.5 L4 4.5 L7.2 1.5" fill="none" stroke="#d0d0d0" stroke-width="1.2"/></svg>
<div class="t" style="left:719px;top:553px;font-size:15px;color:#cfcfcf;font-family:'Liberation Serif',serif;font-weight:bold"><span style="font-size:10px">T</span>T</div>
<div class="a" style="left:740px;top:576px;width:14px;height:15px;background:#444;"></div>
<svg style="left:741px;top:577px;" width="12" height="13" viewBox="0 0 12 13"><path d="M3 4.5 L6 1.5 L9 4.5 M3 8.5 L6 11.5 L9 8.5" stroke="#c8c8c8" stroke-width="1.1" fill="none"/></svg>
<div class="a" style="left:755px;top:576px;width:49px;height:15px;background:#3d3d3d;"></div>
<div class="t" style="left:758px;top:578.5px;font-size:11px;color:#e4e4e4;">100%</div>
<div class="a" style="left:806px;top:576px;width:14px;height:15px;background:#444;"></div>
<svg style="left:809px;top:580.5px;" width="8" height="6" viewBox="0 0 8 6"><path d="M0.8 1.5 L4 4.5 L7.2 1.5" fill="none" stroke="#d0d0d0" stroke-width="1.2"/></svg>
<div class="t" style="left:719px;top:576px;font-size:15px;color:#cfcfcf;font-family:'Liberation Serif',serif;font-weight:bold"><span style="font-size:12px">&#8597;</span>T</div>
<div class="a" style="left:740px;top:599px;width:14px;height:16px;background:#444;"></div>
<svg style="left:741px;top:600px;" width="12" height="14" viewBox="0 0 12 14"><path d="M3 5.0 L6 2.0 L9 5.0 M3 9.0 L6 12.0 L9 9.0" stroke="#c8c8c8" stroke-width="1.1" fill="none"/></svg>
<div class="a" style="left:755px;top:599px;width:49px;height:16px;background:#3d3d3d;"></div>
<div class="t" style="left:758px;top:602.0px;font-size:11px;color:#e4e4e4;">0</div>
<div class="a" style="left:806px;top:599px;width:14px;height:16px;background:#444;"></div>
<svg style="left:809px;top:604.0px;" width="8" height="6" viewBox="0 0 8 6"><path d="M0.8 1.5 L4 4.5 L7.2 1.5" fill="none" stroke="#d0d0d0" stroke-width="1.2"/></svg>
<div class="t" style="left:719px;top:600px;font-size:11px;color:#cfcfcf;letter-spacing:-2px">V/A</div>
<div class="a" style="left:935px;top:552px;width:14px;height:16px;background:#444;"></div>
<svg style="left:936px;top:553px;" width="12" height="14" viewBox="0 0 12 14"><path d="M3 5.0 L6 2.0 L9 5.0 M3 9.0 L6 12.0 L9 9.0" stroke="#c8c8c8" stroke-width="1.1" fill="none"/></svg>
<div class="a" style="left:950px;top:552px;width:49px;height:16px;background:#3d3d3d;"></div>
<div class="t" style="left:953px;top:555.0px;font-size:11px;color:#e4e4e4;">(21 pt)</div>
<div class="a" style="left:1001px;top:552px;width:14px;height:16px;background:#444;"></div>
<svg style="left:1004px;top:557.0px;" width="8" height="6" viewBox="0 0 8 6"><path d="M0.8 1.5 L4 4.5 L7.2 1.5" fill="none" stroke="#d0d0d0" stroke-width="1.2"/></svg>
<svg style="left:916px;top:551px" width="17" height="18"><text x="5" y="8" font-size="8" fill="#cfcfcf" font-family="Liberation Sans">A</text><text x="5" y="17" font-size="8" fill="#cfcfcf" font-family="Liberation Sans">A</text><path d="M2 5V14M0.5 6.5L2 5L3.5 6.5M0.5 12.5L2 14L3.5 12.5" stroke="#cfcfcf" stroke-width="0.9" fill="none"/></svg>
<div class="a" style="left:935px;top:576px;width:14px;height:15px;background:#444;"></div>
<svg style="left:936px;top:577px;" width="12" height="13" viewBox="0 0 12 13"><path d="M3 4.5 L6 1.5 L9 4.5 M3 8.5 L6 11.5 L9 8.5" stroke="#c8c8c8" stroke-width="1.1" fill="none"/></svg>
<div class="a" style="left:950px;top:576px;width:49px;height:15px;background:#3d3d3d;"></div>
<div class="t" style="left:953px;top:578.5px;font-size:11px;color:#e4e4e4;">100%</div>
<div class="a" style="left:1001px;top:576px;width:14px;height:15px;background:#444;"></div>
<svg style="left:1004px;top:580.5px;" width="8" height="6" viewBox="0 0 8 6"><path d="M0.8 1.5 L4 4.5 L7.2 1.5" fill="none" stroke="#d0d0d0" stroke-width="1.2"/></svg>
<svg style="left:915px;top:575px" width="18" height="18"><text x="3" y="12" font-size="14" font-weight="bold" fill="#cfcfcf" font-family="Liberation Serif">T</text><path d="M1 15.5H16M1 15.5L3 14M1 15.5L3 17M16 15.5L14 14M16 15.5L14 17" stroke="#cfcfcf" stroke-width="0.9" fill="none"/></svg>
<div class="a" style="left:935px;top:599px;width:14px;height:16px;background:#444;"></div>
<svg style="left:936px;top:600px;" width="12" height="14" viewBox="0 0 12 14"><path d="M3 5.0 L6 2.0 L9 5.0 M3 9.0 L6 12.0 L9 9.0" stroke="#c8c8c8" stroke-width="1.1" fill="none"/></svg>
<div class="a" style="left:950px;top:599px;width:49px;height:16px;background:#3d3d3d;"></div>
<div class="t" style="left:953px;top:602.0px;font-size:11px;color:#e4e4e4;">0</div>
<div class="a" style="left:1001px;top:599px;width:14px;height:16px;background:#444;"></div>
<svg style="left:1004px;top:604.0px;" width="8" height="6" viewBox="0 0 8 6"><path d="M0.8 1.5 L4 4.5 L7.2 1.5" fill="none" stroke="#d0d0d0" stroke-width="1.2"/></svg>
<svg style="left:915px;top:598px" width="18" height="18"><rect x="0.5" y="1" width="16" height="10" fill="#cfcfcf"/><text x="1.5" y="10" font-size="9.5" font-weight="bold" fill="#4a4a4a" font-family="Liberation Sans">VA</text><path d="M1 14.5H16M1 14.5L3 13M1 14.5L3 16M16 14.5L14 13M16 14.5L14 16" stroke="#cfcfcf" stroke-width="0.9" fill="none"/></svg>
<div class="t" style="left:720px;top:631.8px;font-size:10.5px;color:#c4c4c4;transform:scaleX(0.9432);transform-origin:0 0;">グリフにスナップ</div>
<svg style="left:967px;top:629px;" width="17" height="15" viewBox="0 0 17 15"><rect x="1" y="1" width="9" height="11" fill="none" stroke="#9a9a9a" stroke-width="1"/><text x="2" y="10.5" font-size="10" fill="#9a9a9a" font-family="Liberation Sans">A</text><text x="10" y="11" font-size="9" fill="#9a9a9a" font-family="Liberation Sans">g</text></svg>
<svg style="left:999px;top:629px;" width="15" height="15" viewBox="0 0 15 15"><circle cx="7.5" cy="7.5" r="6.5" fill="none" stroke="#cfcfcf" stroke-width="1.3"/><rect x="6.7" y="6" width="1.8" height="5.5" fill="#cfcfcf"/><circle cx="7.6" cy="3.9" r="1.1" fill="#cfcfcf"/></svg>
<div class="a" style="left:720px;top:658px;width:21px;height:20px;background:#333;"></div>
<div class="a" style="left:760.5px;top:658px;width:21px;height:20px;background:#333;"></div>
<div class="a" style="left:814px;top:658px;width:21px;height:20px;background:#333;"></div>
<div class="a" style="left:868px;top:658px;width:21px;height:20px;background:#333;"></div>
<div class="a" style="left:955px;top:658px;width:21px;height:20px;background:#333;"></div>
<div class="a" style="left:996px;top:658px;width:21px;height:20px;background:#333;"></div>
<svg style="left:720px;top:658px;" width="21" height="20" viewBox="0 0 21 20"><rect x="4" y="4" width="13" height="12" fill="none" stroke="#e0e0e0" stroke-width="1"/><text x="5" y="14.5" font-size="11" fill="#e0e0e0">あ</text></svg>
<svg style="left:760.5px;top:658px;" width="21" height="20" viewBox="0 0 21 20"><rect x="4" y="4" width="13" height="12" fill="none" stroke="#cfcfcf" stroke-width="1"/><text x="5" y="14.5" font-size="11" fill="#cfcfcf">あ</text><path d="M2 9.5H19" stroke="#cfcfcf" stroke-width="0.9"/></svg>
<svg style="left:814px;top:658px;" width="21" height="20" viewBox="0 0 21 20"><rect x="3" y="3" width="14" height="14" fill="none" stroke="#d8d8d8" stroke-width="1"/><text x="4" y="14" font-size="11" fill="#d8d8d8" font-family="Liberation Sans">Ag</text></svg>
<svg style="left:868px;top:658px;" width="21" height="20" viewBox="0 0 21 20"><text x="4" y="14" font-size="11" fill="#d8d8d8" font-family="Liberation Sans">Ax</text><path d="M3 16H18" stroke="#d8d8d8" stroke-width="0.9"/></svg>
<svg style="left:955px;top:658px;" width="21" height="20" viewBox="0 0 21 20"><text x="3.5" y="15" font-size="12" fill="#e0e0e0" font-family="Liberation Sans">A</text><path d="M13 4 L17 16" stroke="#e0e0e0" stroke-width="1"/></svg>
<svg style="left:996px;top:658px;" width="21" height="20" viewBox="0 0 21 20"><text x="4" y="15" font-size="12" fill="#e0e0e0" font-family="Liberation Sans" font-style="italic">A</text><path d="M11 5 Q15 4 14 8" stroke="#e0e0e0" stroke-width="1" fill="none"/></svg>
<div class="a" style="left:922px;top:655px;width:1px;height:25px;background:#444;"></div>
<div class="a" style="left:1021px;top:8px;width:3px;height:676px;background:#3a3a3a;"></div>
<svg style="left:701px;top:38px;" width="8" height="6" viewBox="0 0 8 6"><path d="M0.8 4.5 L4 1.5 L7.2 4.5" fill="none" stroke="#9a9a9a" stroke-width="1.1"/></svg>
<svg style="left:701px;top:659px;" width="8" height="6" viewBox="0 0 8 6"><path d="M0.8 1.5 L4 4.5 L7.2 1.5" fill="none" stroke="#9a9a9a" stroke-width="1.1"/></svg>
<div class="a" style="left:699px;top:334px;width:12px;height:22px;background:#5c5c5c;border-radius:6px"></div>
<div class="a" style="left:35px;top:671px;width:46px;height:13px;background:#363636;"></div>
<div class="a" style="left:82px;top:671px;width:15px;height:13px;background:#3a3a3a;"></div>
<div class="t" style="left:38px;top:673.8px;font-size:10.5px;color:#d0d0d0;">71.62%</div>
<svg style="left:84px;top:674px;" width="8" height="6" viewBox="0 0 8 6"><path d="M0.8 1.5 L4 4.5 L7.2 1.5" fill="none" stroke="#c0c0c0" stroke-width="1.1"/></svg>
<div class="a" style="left:100px;top:671px;width:47px;height:13px;background:#363636;"></div>
<div class="a" style="left:148px;top:671px;width:15px;height:13px;background:#3a3a3a;"></div>
<div class="t" style="left:103px;top:674.2px;font-size:10.5px;color:#d0d0d0;">0°</div>
<svg style="left:148px;top:674px;" width="8" height="6" viewBox="0 0 8 6"><path d="M0.8 1.5 L4 4.5 L7.2 1.5" fill="none" stroke="#c0c0c0" stroke-width="1.1"/></svg>
<svg style="left:168px;top:672px;" width="24" height="10" viewBox="0 0 24 10"><path d="M1 1V9M8 1L3 5L8 9Z M20 1L15 5L20 9Z" stroke="#5e5e5e" fill="#5e5e5e" stroke-width="1"/></svg>
<div class="a" style="left:197px;top:671px;width:38px;height:13px;background:#363636;"></div>
<div class="a" style="left:236px;top:671px;width:15px;height:13px;background:#3a3a3a;"></div>
<div class="t" style="left:200px;top:674.2px;font-size:10.5px;color:#d0d0d0;">1</div>
<svg style="left:237px;top:674px;" width="8" height="6" viewBox="0 0 8 6"><path d="M0.8 1.5 L4 4.5 L7.2 1.5" fill="none" stroke="#c0c0c0" stroke-width="1.1"/></svg>
<svg style="left:255px;top:672px;" width="24" height="10" viewBox="0 0 24 10"><path d="M3 1L8 5L3 9Z M14 1L19 5L14 9Z M22 1V9" stroke="#5e5e5e" fill="#5e5e5e" stroke-width="1"/></svg>
<div class="t" style="left:349px;top:674.0px;font-size:10px;color:#c4c4c4;transform:scaleX(0.8667);transform-origin:0 0;">シェイプ形成</div>
<svg style="left:469px;top:673px;" width="6" height="9" viewBox="0 0 6 9"><path d="M0.5 0.5L5.5 4.5L0.5 8.5Z" fill="#d0d0d0"/></svg>
<div class="a" style="left:480px;top:670px;width:218px;height:14px;background:#3a3a3a;"></div>
<svg style="left:485px;top:673px;" width="5" height="8" viewBox="0 0 5 8"><path d="M4 0.5L1 4L4 7.5" fill="none" stroke="#9a9a9a" stroke-width="1"/></svg>
<div class="a" style="left:578px;top:672px;width:23px;height:11px;background:#555;border-radius:6px"></div>
<svg style="left:688px;top:673px;" width="5" height="8" viewBox="0 0 5 8"><path d="M1 0.5L4 4L1 7.5" fill="none" stroke="#9a9a9a" stroke-width="1"/></svg>
<div class="a" style="left:33px;top:390px;width:468px;height:31px;background:#444;border-radius:4px;border:1px solid #2e2e2e"></div>
<div class="a" style="left:37px;top:394px;width:4px;height:24px;background:#8e8e8e;border-radius:2px"></div>
<div class="a" style="left:50px;top:394px;width:211px;height:24px;background:#424242;border:1px solid #595959;border-radius:2px"></div>
<svg style="left:56px;top:398px;" width="17" height="16" viewBox="0 0 17 16"><rect x="2" y="4" width="11" height="10" fill="#9a9a9a" stroke="#c8c8c8" stroke-width="1.2"/><path d="M6 10 L11 5" stroke="#444" stroke-width="1.2"/><path d="M13.5 0.5 L14.3 2.7 L16.5 3.5 L14.3 4.3 L13.5 6.5 L12.7 4.3 L10.5 3.5 L12.7 2.7Z" fill="#e0e0e0"/><circle cx="2" cy="14" r="1.5" fill="#c8c8c8"/><circle cx="13" cy="14" r="1.5" fill="#c8c8c8"/><circle cx="2" cy="4" r="1.5" fill="#c8c8c8"/></svg>
<div class="t" style="left:77px;top:400.5px;font-size:11px;color:#e2e2e2;transform:scaleX(1.0705);transform-origin:0 0;">生成塗りつぶし (シェイプ) (Beta)</div>
<div class="a" style="left:266px;top:394px;width:103px;height:24px;background:#424242;border:1px solid #595959;border-radius:2px"></div>
<svg style="left:273px;top:398px;" width="17" height="16" viewBox="0 0 17 16"><rect x="1" y="1" width="15" height="14" fill="none" stroke="#bdbdbd" stroke-width="1"/><rect x="4" y="4" width="9" height="8" fill="#8a8a8a"/><path d="M1 1 L16 15" stroke="#e0e0e0" stroke-width="1.3"/></svg>
<div class="t" style="left:295px;top:400.5px;font-size:11px;color:#e2e2e2;transform:scaleX(0.9848);transform-origin:0 0;">グループ解除</div>
<svg style="left:375px;top:399px;" width="14" height="14" viewBox="0 0 14 14"><rect x="3" y="3" width="8" height="8" fill="none" stroke="#c8c8c8" stroke-width="1"/><path d="M0.5 0.5H3.5V3.5H0.5Z M10.5 0.5H13.5V3.5H10.5Z M0.5 10.5H3.5V13.5H0.5Z M10.5 10.5H13.5V13.5H10.5Z" fill="#c8c8c8"/></svg>
<svg style="left:400px;top:398px;" width="16" height="16" viewBox="0 0 16 16"><circle cx="8" cy="8" r="7" fill="#bdbdbd"/><path d="M8 8 L8 1 M8 8 L14 5 M8 8 L12 14 M8 8 L3 13 M8 8 L1.5 6" stroke="#555" stroke-width="1.1"/><circle cx="8" cy="8" r="2.2" fill="#eee"/></svg>
<div class="a" style="left:424px;top:398px;width:15px;height:16px;background:#333;border:1px solid #5a5a5a"></div>
<div class="t" style="left:427.5px;top:400.0px;font-size:13px;color:#e0e0e0;">?</div>
<svg style="left:447px;top:400px;" width="15" height="12" viewBox="0 0 15 12"><rect x="0" y="0" width="15" height="3" fill="#c8c8c8"/><rect x="0" y="4.5" width="15" height="3" fill="#c8c8c8"/><rect x="0" y="9" width="15" height="3" fill="#c8c8c8"/></svg>
<svg style="left:475px;top:404px;" width="16" height="4" viewBox="0 0 16 4"><circle cx="2" cy="2" r="1.8" fill="#d0d0d0"/><circle cx="8" cy="2" r="1.8" fill="#d0d0d0"/><circle cx="14" cy="2" r="1.8" fill="#d0d0d0"/></svg>
<svg width="1024" height="686" style="left:0;top:0">
<path d="M809.3 150.3 H880.2 A13.75 13.75 0 0 1 880.2 177.8 H809.3 A13.75 13.75 0 0 1 809.3 150.3 Z" fill="none" stroke="#e05c5c" stroke-width="3"/>
<g font-size="28" font-weight="bold" font-family="Liberation Sans, sans-serif" stroke-linejoin="round">
<g fill="#fff" stroke="#fff" stroke-width="13.0"><text transform="translate(461.8 226.3) scale(1.013 1.000)">普</text><text transform="translate(495.3 226.3) scale(1.048 1.000)">通</text><text transform="translate(529.2 226.3) scale(1.013 1.000)">の</text><text transform="translate(553.8 238.3) scale(0.683 1.494)">「</text><text transform="translate(576.2 226.3) scale(1.017 1.000)">グ</text><text transform="translate(611.6 226.3) scale(1.003 1.000)">ル</text><text transform="translate(645.4 226.3) scale(0.996 1.000)">ー</text><text transform="translate(677.8 226.3) scale(0.977 1.000)">プ</text><text transform="translate(709.1 223.5) scale(0.917 1.517)">」</text><text transform="translate(728.1 226.3) scale(1.054 1.000)">に</text><text transform="translate(762.9 226.3) scale(1.078 1.000)">な</text><text transform="translate(797.5 226.3) scale(1.030 1.000)">る</text><text transform="translate(829.1 226.3) scale(0.963 1.000)">の</text><text transform="translate(864.2 226.3) scale(0.928 1.000)">で</text><text transform="translate(462.3 270.0) scale(1.075 1.000)">こ</text><text transform="translate(494.1 270.0) scale(1.042 1.000)">の</text><text transform="translate(529.5 270.0) scale(1.032 1.000)">状</text><text transform="translate(563.6 270.0) scale(0.960 1.000)">態</text><text transform="translate(596.4 270.0) scale(0.928 1.000)">で</text><text transform="translate(627.2 270.0) scale(1.100 1.000)">シ</text><text transform="translate(661.6 269.4) scale(0.978 1.029)">ェ</text><text transform="translate(695.6 270.0) scale(1.120 1.000)">イ</text><text transform="translate(726.5 270.0) scale(0.947 1.000)">プ</text><text transform="translate(761.6 270.0) scale(0.997 1.000)">形</text><text transform="translate(793.9 270.0) scale(1.057 1.000)">成</text></g>
<path d="M896.5 221 L904.5 229" stroke="#fff" stroke-width="16" stroke-linecap="round"/>
<g fill="#f26868" stroke="#f26868" stroke-width="3.0"><text transform="translate(461.8 226.3) scale(1.013 1.000)">普</text><text transform="translate(495.3 226.3) scale(1.048 1.000)">通</text><text transform="translate(529.2 226.3) scale(1.013 1.000)">の</text><text transform="translate(553.8 238.3) scale(0.683 1.494)">「</text><text transform="translate(576.2 226.3) scale(1.017 1.000)">グ</text><text transform="translate(611.6 226.3) scale(1.003 1.000)">ル</text><text transform="translate(645.4 226.3) scale(0.996 1.000)">ー</text><text transform="translate(677.8 226.3) scale(0.977 1.000)">プ</text><text transform="translate(709.1 223.5) scale(0.917 1.517)">」</text><text transform="translate(728.1 226.3) scale(1.054 1.000)">に</text><text transform="translate(762.9 226.3) scale(1.078 1.000)">な</text><text transform="translate(797.5 226.3) scale(1.030 1.000)">る</text><text transform="translate(829.1 226.3) scale(0.963 1.000)">の</text><text transform="translate(864.2 226.3) scale(0.928 1.000)">で</text><text transform="translate(462.3 270.0) scale(1.075 1.000)">こ</text><text transform="translate(494.1 270.0) scale(1.042 1.000)">の</text><text transform="translate(529.5 270.0) scale(1.032 1.000)">状</text><text transform="translate(563.6 270.0) scale(0.960 1.000)">態</text><text transform="translate(596.4 270.0) scale(0.928 1.000)">で</text><text transform="translate(627.2 270.0) scale(1.100 1.000)">シ</text><text transform="translate(661.6 269.4) scale(0.978 1.029)">ェ</text><text transform="translate(695.6 270.0) scale(1.120 1.000)">イ</text><text transform="translate(726.5 270.0) scale(0.947 1.000)">プ</text><text transform="translate(761.6 270.0) scale(0.997 1.000)">形</text><text transform="translate(793.9 270.0) scale(1.057 1.000)">成</text></g>
<path d="M896.5 221 L904.5 229" stroke="#f26868" stroke-width="6" stroke-linecap="round"/>
</g></svg>
</div></body></html>
